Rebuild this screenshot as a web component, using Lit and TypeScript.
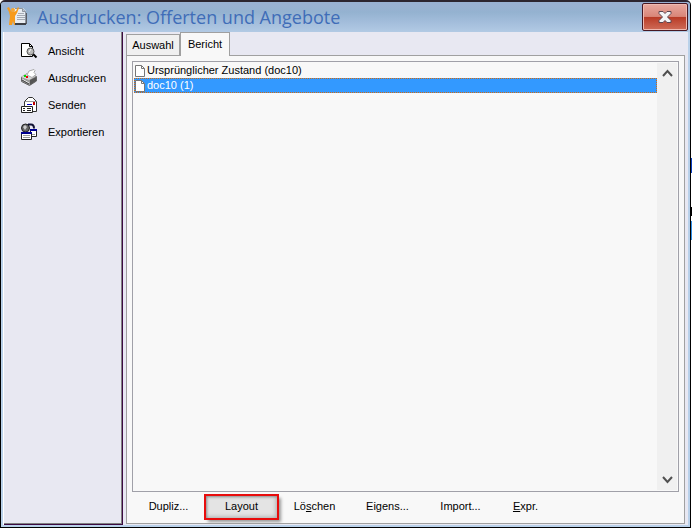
import { LitElement, html, css, svg } from "lit";
import { customElement, state } from "lit/decorators.js";

const logo = svg`<svg width="22" height="22" viewBox="0 0 22 22" aria-hidden="true">
  <path d="M7 2h9l3 3v13H7z" fill="#e9edf2"/>
  <path d="M8 2.500h7.500l3 3V17" fill="none" stroke="#8d949e"/>
  <path d="M15.500 2.500v3h3" fill="#c3c9d0" stroke="#8d949e"/>
  <path d="M11 7.500h6M10 9.500h8M10 11.500h8M10 13.500h8" stroke="#a6acb4"/>
  <path d="M8 18h11" stroke="#3e4046" stroke-width="2"/>
  <path d="M19.500 7v11" stroke="#5a5d64"/>
  <path d="M0 2l2-1 2 4 2 1 3-1 2-4 1 1-2 5-2 3v9H7l-1-4-1 4H2l1-9-1-4z" fill="#f79b1c"/>
  <circle cx="6" cy="4" r="2" fill="#f9a732"/>
</svg>`;

const icons = {
  view: svg`<svg width="18" height="18" viewBox="0 0 18 18" aria-hidden="true">
    <path d="M1.500 1.500h8l3 3v10h-11z" fill="#fff" stroke="#000"/>
    <path d="M9.500 1.500v3h3" fill="none" stroke="#000"/>
    <path d="M12.500 11.500l4 4" stroke="#000" stroke-width="2"/>
    <circle cx="10.500" cy="9.500" r="3.500" fill="#b9b9b9" stroke="#555"/>
    <path d="M9 10l2-3" stroke="#fff"/>
  </svg>`,
  print: svg`<svg width="18" height="18" viewBox="0 0 18 18" aria-hidden="true">
    <path d="M1.500 8l6-3.500 9 3v4.500l-7 4.500-8-4z" fill="#9a9a9a" stroke="#666"/>
    <path d="M1 8l7-4 8 3-7 4z" fill="#d6d6d6"/>
    <path d="M7 6l2-4 5-1.500 1 1-1 2 2 2-4 3z" fill="#fff" stroke="#aaa"/>
    <path d="M10 11v5l6-4V8z" fill="#555"/>
    <path d="M4 7h2" stroke="#0d0" stroke-width="2"/><path d="M6 8h2" stroke="#e00" stroke-width="2"/>
    <path d="M2 10l7 4" stroke="#eee"/><path d="M2 11l7 4" stroke="#444"/>
  </svg>`,
  send: svg`<svg width="18" height="18" viewBox="0 0 18 18" aria-hidden="true">
    <path d="M4.500 10V5.500l4-4h4l4 4v10h-6" fill="#fff" stroke="#333"/>
    <path d="M5 5.500h11" stroke="#999"/>
    <path d="M7 8.500h5" stroke="#0000c0"/><path d="M13 6h2v3h-2z" fill="#c00000"/>
    <path d="M1.500 10.500h11v6h-11z" fill="#fff" stroke="#222"/>
    <path d="M3 12.500h2M3 14.500h2M7 12.500h4M7 14.500h4" stroke="#222"/>
  </svg>`,
  export: svg`<svg width="18" height="18" viewBox="0 0 18 18" aria-hidden="true">
    <circle cx="5.500" cy="5" r="4" fill="#666" stroke="#222"/>
    <path d="M3 4l2-2 2 2-2 3z" fill="#ccc"/>
    <path d="M8 1.500h3q3 0 3 4" fill="none" stroke="#111133" stroke-width="2"/>
    <path d="M10.500 6.500h6v7h-6z" fill="#fff" stroke="#222"/><path d="M10 6h7v2h-7z" fill="#000090"/>
    <path d="M1.500 9.500h10v7h-10z" fill="#fff" stroke="#222"/><path d="M1 9h11v2H1z" fill="#000090"/>
    <path d="M3 12.500h7M3 14.500h7M12 11.500h3" stroke="#999"/>
  </svg>`,
};

const sheet = svg`<svg width="12" height="13" viewBox="0 0 12 13" aria-hidden="true">
  <path d="M1.500 1.500h6l3 3v8h-9z" fill="#fff" stroke="#777"/><path d="M7.500 1.500v3h3" fill="none" stroke="#777"/>
</svg>`;

const closeGlyph = svg`<svg width="14" height="12" viewBox="0 0 14 12" aria-hidden="true">
  <path d="M1 .5h4l2 2 2-2h4v2L9.500 6l3.500 3.500v2H9l-2-2-2 2H1v-2L4.500 6 1 2.500z" fill="#f4f4f6" stroke="#5c4650"/>
</svg>`;

@customElement("app-root")
export class AppRoot extends LitElement {
  @state() private tab = "Bericht";
  @state() private selected = 1;

  private nav = [
    { label: "Ansicht", icon: icons.view },
    { label: "Ausdrucken", icon: icons.print },
    { label: "Senden", icon: icons.send },
    { label: "Exportieren", icon: icons.export },
  ];
  private reports = ["Ursprünglicher Zustand (doc10)", "doc10 (1)"];

  static styles = css`
    :host {
      display: block;
      box-sizing: border-box;
      height: 100vh;
      padding: 0 1px 1px 0;
      background: linear-gradient(#fff 0 158px, #0a3fc0 158px 173px, #fff 173px 207px, #000 207px 216px, #fff 216px 221px, #2f8fe8 221px 240px, #fff 240px);
      font: 11px/15px "Liberation Sans", Arial, sans-serif;
      color: #000;
    }
    * { box-sizing: border-box; }
    button {
      font: inherit;
      color: inherit;
      margin: 0;
      padding: 0;
      border: 0;
      background: none;
    }
    .window {
      height: 100%;
      display: flex;
      flex-direction: column;
      border: 1px solid #000;
      border-top: 2px solid #2c2430;
      border-radius: 5px 5px 0 0;
      background: #b9d1ea;
      overflow: hidden;
    }
    .title {
      display: flex;
      align-items: center;
      height: 30px;
      flex: none;
      padding: 0 2px 0 6px;
      background: linear-gradient(#99b0d2 0 4px, #94b2d0 10px, #a3bddb 20px, #b2cae4);
    }
    h1 {
      flex: 1;
      margin: 0 0 0 8px;
      font: 400 18px/28px "Open Sans", "Noto Sans", sans-serif;
      color: #3f6db8;
      white-space: nowrap;
    }
    .close {
      display: grid;
      place-items: center;
      width: 46px;
      height: 28px;
      border: 1px solid #471823;
      border-radius: 2px;
      box-shadow: inset 0 0 0 1px #efb9b0;
      background: linear-gradient(#e8a89f, #d98678 48%, #b83a25 50%, #cf6c58);
    }
    .body {
      flex: 1;
      min-height: 0;
      display: flex;
      margin: 0 2px 2px;
      border-left: 1px solid #fff;
      background: #e8e8f2;
    }
    nav {
      width: 119px;
      flex: none;
      display: flex;
      flex-direction: column;
      gap: 3px;
      padding: 7px 0 0 16px;
      border-right: 1px solid #3c0a42;
      border-bottom: 1px solid #3c0a42;
      box-shadow: inset -1px -1px #808080;
    }
    nav button {
      display: flex;
      align-items: center;
      gap: 10px;
      height: 24px;
      text-align: left;
    }
    main {
      flex: 1;
      min-width: 0;
      display: flex;
      flex-direction: column;
      padding: 0 3px 1px;
    }
    .tabs { display: flex; align-items: flex-end; height: 23px; flex: none; }
    .tabs button {
      height: 21px;
      width: 54px;
      border: 1px solid #a0a0a0;
      border-bottom: 0;
      background: #f0f0f0;
    }
    .tabs .active {
      position: relative;
      width: 50px;
      height: 24px;
      margin-bottom: -1px;
      background: #f8f8f8;
    }
    .panel {
      flex: 1;
      min-height: 0;
      display: flex;
      flex-direction: column;
      border: 1px solid #a0a0a0;
      background: #f8f8f8;
      padding: 5px 5px 2px;
    }
    .list {
      flex: 1;
      min-height: 0;
      display: flex;
      border: 1px solid #a0a0a8;
      padding: 1px;
    }
    ul { flex: 1; margin: 0; padding: 0; list-style: none; }
    li button {
      display: flex;
      align-items: center;
      gap: 1px;
      width: 100%;
      height: 15px;
    }
    li .selected {
      background: #3399ff;
      color: #fff;
      outline: 1px dotted #d06a10;
      outline-offset: -1px;
    }
    .scroll {
      width: 20px;
      display: flex;
      flex-direction: column;
      justify-content: space-between;
      background: #f0f0f0;
    }
    .scroll button { height: 20px; display: grid; place-items: center; }
    footer { display: flex; align-items: center; height: 29px; flex: none; }
    footer button { width: 73px; height: 24px; }
    footer button:last-child { width: 57px; }
    footer .focus {
      outline: 2px solid #e80c0c;
      outline-offset: -1px;
      background: #e4e4e4;
      box-shadow: inset 2px 2px 3px #888, inset -2px -2px 4px #aaa, 3px 3px 3px #999;
    }
  `;

  render() {
    return html`
      <div class="window">
        <header class="title">
          ${logo}
          <h1>Ausdrucken: Offerten und Angebote</h1>
          <button class="close" aria-label="Schliessen">${closeGlyph}</button>
        </header>
        <div class="body">
          <nav>${this.nav.map((n) => html`<button>${n.icon}<span>${n.label}</span></button>`)}</nav>
          <main>
            <div class="tabs" role="tablist">
              ${["Auswahl", "Bericht"].map((t) => html`<button role="tab" aria-selected=${t === this.tab}
                class=${t === this.tab ? "active" : ""} @click=${() => (this.tab = t)}>${t}</button>`)}
            </div>
            <section class="panel">
              <div class="list">
                <ul>
                  ${this.reports.map((r, i) => html`<li><button class=${i === this.selected ? "selected" : ""}
                    @click=${() => (this.selected = i)}>${sheet}<span>${r}</span></button></li>`)}
                </ul>
                <div class="scroll">
                  <button aria-label="Nach oben"><svg width="11" height="8"><path d="M1 7l4.500-5L10 7" fill="none" stroke="#505050" stroke-width="2"/></svg></button>
                  <button aria-label="Nach unten"><svg width="11" height="8"><path d="M1 1l4.500 5L10 1" fill="none" stroke="#505050" stroke-width="2"/></svg></button>
                </div>
              </div>
              <footer>
                <button>Dupliz...</button>
                <button class="focus">Layout</button>
                <button>Lö<u>s</u>chen</button>
                <button>Eigens...</button>
                <button>Import...</button>
                <button><u>E</u>xpr.</button>
              </footer>
            </section>
          </main>
        </div>
      </div>
    `;
  }
}
